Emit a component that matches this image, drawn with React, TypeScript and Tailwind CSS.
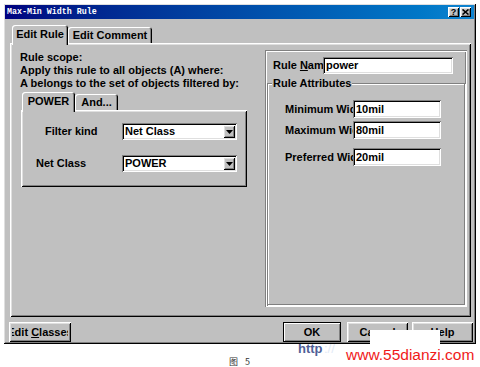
import type { ReactNode } from "react";

// win95-ish bevels
const raised =
  "shadow-[inset_1px_1px_0_#fff,inset_-1px_-1px_0_#000,inset_2px_2px_0_#dfdfdf,inset_-2px_-2px_0_#808080]";
const sunken =
  "shadow-[inset_1px_1px_0_#808080,inset_-1px_-1px_0_#fff,inset_2px_2px_0_#000,inset_-2px_-2px_0_#dfdfdf]";
const etched =
  "shadow-[inset_1px_1px_0_#808080,inset_-1px_-1px_0_#fff,inset_2px_2px_0_#fff,inset_-2px_-2px_0_#808080]";
const tabEdge = "shadow-[inset_1px_1px_0_#fff,inset_-1px_0_0_#000,inset_-2px_0_0_#808080]";

function Tab({ active, width, children }: { active?: boolean; width: string; children: ReactNode }) {
  return (
    <div
      className={`relative flex items-center justify-center rounded-t-[3px] bg-[#c0c0c0] ${tabEdge} ${width} ${
        active ? "z-10 mb-[-2px] h-[20px] pb-[2px]" : "h-[16px]"
      }`}
    >
      <span className="whitespace-nowrap leading-none">{children}</span>
    </div>
  );
}

function TextBox({ value, width, height = "h-[17px]" }: { value: string; width: string; height?: string }) {
  return (
    <div className={`flex shrink-0 items-center bg-white pl-[3px] ${sunken} ${width} ${height}`}>
      <span className="leading-none">{value}</span>
    </div>
  );
}

function Select({ value }: { value: string }) {
  return (
    <div className={`flex h-[17px] w-[115px] shrink-0 items-center bg-white p-[2px] ${sunken}`}>
      <span className="flex-1 pl-[1px] leading-none">{value}</span>
      <span className={`flex h-[13px] w-[12px] items-center justify-center bg-[#c0c0c0] ${raised}`}>
        <svg width="7" height="4" viewBox="0 0 7 4">
          <path d="M0 0h7L3.5 4z" fill="#000" />
        </svg>
      </span>
    </div>
  );
}

function Button({ width, def, tight, children }: { width: string; def?: boolean; tight?: boolean; children: ReactNode }) {
  return (
    <div
      className={`flex h-[20px] shrink-0 bg-[#c0c0c0] ${tight ? "px-[3px] py-[2px]" : "p-[2px]"} ${width} ${
        def
          ? "shadow-[inset_0_0_0_1px_#000,inset_2px_2px_0_#fff,inset_-2px_-2px_0_#808080]"
          : raised
      }`}
    >
      <div className="flex flex-1 items-center justify-center overflow-hidden">
        <span className="shrink-0 whitespace-nowrap leading-none">{children}</span>
      </div>
    </div>
  );
}

function TitleBtn({ children }: { children: ReactNode }) {
  return (
    <div className={`flex h-[10px] w-[11px] items-center justify-center bg-[#c0c0c0] ${raised}`}>{children}</div>
  );
}

export default function App() {
  return (
    <div className="relative h-[367px] w-[480px] overflow-hidden bg-white font-['Liberation_Sans',Arial,sans-serif] text-[11px] font-bold text-black">
      <div className="pl-[3px] pt-[3px]">
        <div className={`flex h-[341px] w-[473px] flex-col bg-[#c0c0c0] p-[2px] ${raised}`}>
          {/* title bar */}
          <div className="flex h-[14px] shrink-0 items-center bg-linear-to-r from-[#000080] to-[#1084d0] pl-[2px] pr-[3px]">
            <span className="font-['Liberation_Mono',monospace] text-[8.3px] leading-none text-white">
              Max-Min Width Rule
            </span>
            <div className="ml-auto flex gap-[1px]">
              <TitleBtn>
                <span className="text-[9px] leading-none">?</span>
              </TitleBtn>
              <TitleBtn>
                <svg width="7" height="6" viewBox="0 0 7 6">
                  <path d="M0.5 0.5l6 5M6.5 0.5l-6 5" stroke="#000" strokeWidth="1.6" />
                </svg>
              </TitleBtn>
            </div>
          </div>

          <div className="ml-[5px] mt-[7px] w-[461px]">
            <div className="flex h-[17px] items-end pl-[2px]">
              <Tab active width="w-[56px]">Edit Rule</Tab>
              <Tab width="w-[84px]">Edit Comment</Tab>
            </div>

            <div className={`flex h-[274px] items-start bg-[#c0c0c0] pl-[10px] ${raised}`}>
              {/* left column */}
              <div className="w-[227px] pt-[8px]">
                <div className="leading-[13px]">
                  <div>Rule scope:</div>
                  <div className="whitespace-nowrap">Apply this rule to all objects (A) where:</div>
                  <div className="whitespace-nowrap">A belongs to the set of objects filtered by:</div>
                </div>
                <div className="flex h-[20px] items-end pl-[2px]">
                  <Tab active width="w-[53px]">POWER</Tab>
                  <Tab width="w-[43px]">And...</Tab>
                </div>
                <div className={`ml-[1px] flex h-[77px] w-[226px] flex-col gap-[15px] bg-[#c0c0c0] pt-[13px] ${raised}`}>
                  <div className="flex items-center">
                    <div className="w-[101px] pl-[24px]">Filter kind</div>
                    <Select value="Net Class" />
                  </div>
                  <div className="flex items-center">
                    <div className="w-[101px] pl-[15px]">Net Class</div>
                    <Select value="POWER" />
                  </div>
                </div>
              </div>

              {/* right column */}
              <div className={`ml-[18px] mt-[7px] flex h-[257px] w-[202px] flex-col ${etched}`}>
                <div className="mt-[7px] flex items-center">
                  <div className="w-[58px] overflow-hidden whitespace-nowrap pl-[8px]">
                    Rule <span className="underline">N</span>ame
                  </div>
                  <TextBox value="power" width="w-[130px]" />
                </div>
                <fieldset className="mx-[2px] mb-[2px] mt-[3px] flex-1 border border-[#808080] shadow-[inset_1px_1px_0_#fff,1px_1px_0_#fff]">
                  <legend className="ml-[4px] bg-[#c0c0c0] px-[1px] leading-[13px]">Rule Attributes</legend>
                  <div className="mt-[10px] flex items-center">
                    <div className="w-[85px] overflow-hidden whitespace-nowrap pl-[17px]">Minimum Width</div>
                    <TextBox value="10mil" width="w-[88px]" height="h-[18px]" />
                  </div>
                  <div className="mt-[3px] flex items-center">
                    <div className="w-[85px] overflow-hidden whitespace-nowrap pl-[17px]">Maximum Width</div>
                    <TextBox value="80mil" width="w-[88px]" height="h-[18px]" />
                  </div>
                  <div className="mt-[9px] flex items-center">
                    <div className="w-[85px] overflow-hidden whitespace-nowrap pl-[17px]">Preferred Width</div>
                    <TextBox value="20mil" width="w-[88px]" height="h-[18px]" />
                  </div>
                </fieldset>
              </div>
            </div>
          </div>

          {/* buttons */}
          <div className="mt-[5px] flex">
            <div className="ml-[4px]">
              <Button tight width="w-[62px]">
                Edit <span className="underline">C</span>lasses
              </Button>
            </div>
            <div className="ml-auto">
              <Button def width="w-[58px]">OK</Button>
            </div>
            <div className="ml-[6px]">
              <Button width="w-[61px]">Cancel</Button>
            </div>
            <div className="ml-[4px] mr-[1px]">
              <Button width="w-[61px]">Help</Button>
            </div>
          </div>
        </div>
      </div>

      {/* caption */}
      <div className="mt-[12px] flex pl-[229px] font-['Noto_Sans_CJK_SC',sans-serif] text-[9px] font-normal leading-[12px] text-[#333]">
        <span>图</span>
        <span className="ml-[7px]">5</span>
      </div>

      {/* watermark pasted over the screenshot */}
      <div className="absolute left-[370px] top-[330px] h-[14px] w-[70px] bg-white" />
      <div className="absolute left-[298px] top-[342px] text-[13px] leading-none text-[#4f5f97]">http</div>
      <div className="absolute left-[324px] top-[342px] text-[13px] font-normal leading-none text-[#e2eaf6]">://</div>
      <div className="absolute left-[346px] top-[347px] text-[15.5px] font-normal leading-none text-[#f01a1a]">
        www.55dianzi.com
      </div>
    </div>
  );
}
